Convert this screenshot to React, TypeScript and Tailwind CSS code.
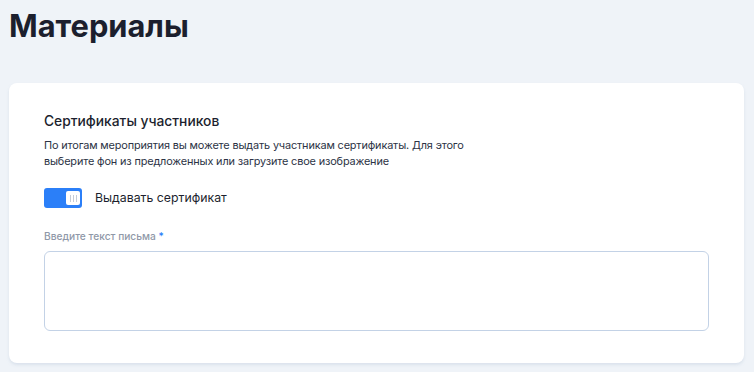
import React from "react";

export default function App() {
  return (
    <div className="w-[754px] h-[372px] bg-[#eff3f8] overflow-hidden" style={{ fontFamily: "Inter, 'Noto Sans', sans-serif" }}>
      <h1 className="pl-[9px] pt-[6px] text-[30.8px] leading-[40px] font-bold text-[#1c1f2e]">Материалы</h1>
      <div className="mt-[37px] ml-[9px] w-[735px] h-[280px] bg-white rounded-[8px] shadow-[0_2px_3px_rgba(180,195,215,0.35)] pl-[35px] pr-[35px] pt-[28px]">
        <h2 className="text-[13.8px] leading-[20px] font-medium text-[#1c1f2e]">Сертификаты участников</h2>
        <p className="mt-[6px] text-[10.9px] leading-[16px] text-[#2c3345] w-[440px] tracking-[-0.15px]">
          По итогам мероприятия вы можете выдать участникам сертификаты. Для этого выберите фон из предложенных или загрузите свое изображение
        </p>
        <div className="mt-[19px] flex items-center gap-[13px]">
          <div className="w-[38px] h-[20px] rounded-[3px] bg-[#2b7ff8] flex items-center justify-end pr-[2px]">
            <div className="w-[14px] h-[14px] rounded-[2px] bg-white flex items-center justify-center gap-[2px]">
              <span className="w-px h-[7px] bg-[#c6ccd6]" />
              <span className="w-px h-[7px] bg-[#c6ccd6]" />
              <span className="w-px h-[7px] bg-[#c6ccd6]" />
            </div>
          </div>
          <span className="text-[12.3px] leading-[20px] text-[#1c1f2e]">Выдавать сертификат</span>
        </div>
        <div className="mt-[21px] text-[10.2px] leading-[14px] font-medium text-[#8f98a8]">
          Введите текст письма <span className="text-[#2b7ff8]">*</span>
        </div>
        <div className="mt-[8px] w-[665px] h-[80px] border border-[#c3d2e6] rounded-[6px]" />
      </div>
    </div>
  );
}
